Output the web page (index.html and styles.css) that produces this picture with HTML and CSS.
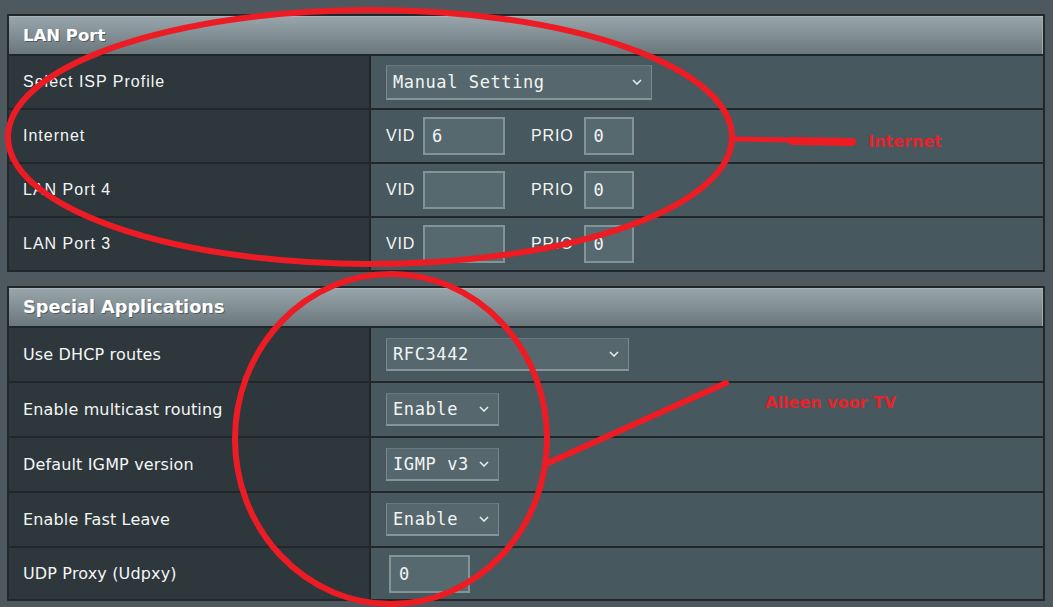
FILE: index.html
```html
<!DOCTYPE html>
<html lang="en">
<head>
<meta charset="utf-8">
<title>LAN Port / Special Applications</title>
<link rel="stylesheet" href="styles.css">
</head>
<body>
<div class="page">
  <section class="form-table form-table-lan">
    <div class="form-head">LAN Port</div>
    <div class="form-row">
      <div class="label">Select ISP Profile</div>
      <div class="value">
        <div class="select select-wide"><span>Manual Setting</span><svg class="chev" viewBox="0 0 10 6"><polyline points="1,1 5,5 9,1"/></svg></div>
      </div>
    </div>
    <div class="form-row">
      <div class="label">Internet</div>
      <div class="value">
        <span class="field-label">VID</span><div class="input input-vid">6</div>
        <span class="field-label field-label-prio">PRIO</span><div class="input input-prio">0</div>
      </div>
    </div>
    <div class="form-row">
      <div class="label">LAN Port 4</div>
      <div class="value">
        <span class="field-label">VID</span><div class="input input-vid"></div>
        <span class="field-label field-label-prio">PRIO</span><div class="input input-prio">0</div>
      </div>
    </div>
    <div class="form-row">
      <div class="label">LAN Port 3</div>
      <div class="value">
        <span class="field-label">VID</span><div class="input input-vid"></div>
        <span class="field-label field-label-prio">PRIO</span><div class="input input-prio">0</div>
      </div>
    </div>
  </section>

  <section class="form-table form-table-apps">
    <div class="form-head">Special Applications</div>
    <div class="form-row">
      <div class="label">Use DHCP routes</div>
      <div class="value">
        <div class="select select-rfc"><span>RFC3442</span><svg class="chev" viewBox="0 0 10 6"><polyline points="1,1 5,5 9,1"/></svg></div>
      </div>
    </div>
    <div class="form-row">
      <div class="label">Enable multicast routing</div>
      <div class="value">
        <div class="select select-small"><span>Enable</span><svg class="chev" viewBox="0 0 10 6"><polyline points="1,1 5,5 9,1"/></svg></div>
      </div>
    </div>
    <div class="form-row">
      <div class="label">Default IGMP version</div>
      <div class="value">
        <div class="select select-small"><span>IGMP v3</span><svg class="chev" viewBox="0 0 10 6"><polyline points="1,1 5,5 9,1"/></svg></div>
      </div>
    </div>
    <div class="form-row">
      <div class="label">Enable Fast Leave</div>
      <div class="value">
        <div class="select select-small"><span>Enable</span><svg class="chev" viewBox="0 0 10 6"><polyline points="1,1 5,5 9,1"/></svg></div>
      </div>
    </div>
    <div class="form-row">
      <div class="label">UDP Proxy (Udpxy)</div>
      <div class="value">
        <div class="input input-udp">0</div>
      </div>
    </div>
  </section>

  <svg class="annot" viewBox="0 0 1053 607" width="1053" height="607">
    <ellipse cx="370" cy="137" rx="362" ry="127"/>
    <line x1="733" y1="139" x2="792" y2="140" class="thin"/>
    <line x1="792" y1="141" x2="852" y2="142" class="thick"/>
    <text x="868" y="147">Internet</text>
    <ellipse cx="391" cy="439" rx="156" ry="165"/>
    <line x1="548" y1="463" x2="726" y2="383"/>
    <text x="765" y="408">Alleen voor TV</text>
  </svg>
</div>
</body>
</html>
```

FILE: styles.css
```css
html, body {
  margin: 0;
  padding: 0;
}

body {
  background: #4d595e;
  color: #ffffff;
  font-family: "Liberation Sans", Arial, sans-serif;
  overflow: hidden;
}

.page {
  position: relative;
  width: 1053px;
  height: 607px;
  box-sizing: border-box;
  padding: 14px 8px 0 7px;
}

.form-table {
  border: 2px solid #222729;
  background: #47585e;
}

.form-table-apps {
  margin-top: 14px;
}

.form-head {
  height: 38px;
  display: flex;
  align-items: center;
  padding-left: 14px;
  background: linear-gradient(#99a6ab, #6a787e);
  box-shadow: inset 0 1px 0 #a9b3b7, inset -1px 0 0 #a2adb1;
  font-family: "DejaVu Sans", Verdana, sans-serif;
  font-weight: bold;
  font-size: 16.5px;
  color: #ffffff;
  text-shadow: 1px 1px 0 rgba(0, 0, 0, 0.35);
}

.form-table-apps .form-head {
  font-size: 17.7px;
}

.form-row {
  display: grid;
  grid-template-columns: 362px 1fr;
  border-top: 2px solid #222729;
  height: 52px;
}

.form-table-apps .form-row {
  height: 53px;
}

.form-table-apps .form-row:last-child {
  height: 51px;
}

.label {
  background: #2e373c;
  border-right: 2px solid #222729;
  display: flex;
  align-items: center;
  padding-left: 14px;
  font-size: 16px;
  letter-spacing: 1px;
  color: #f4f6f6;
}

.form-table-apps .label {
  font-family: "DejaVu Sans", Verdana, sans-serif;
  font-size: 16px;
  letter-spacing: 0.15px;
}

.value {
  display: flex;
  align-items: center;
  padding-left: 15px;
  background: #47585e;
}

.field-label {
  font-size: 16px;
  letter-spacing: 0.8px;
  margin-right: 8px;
  color: #f4f6f6;
}

.field-label-prio {
  margin-left: 26px;
  margin-right: 11px;
}

.select {
  box-sizing: border-box;
  display: flex;
  align-items: center;
  justify-content: space-between;
  padding-left: 6px;
  padding-right: 9px;
  background: #56686e;
  border: 1px solid #7a898e;
  border-top-color: #6a797e;
  border-bottom: 2px solid #87959a;
  font-family: "DejaVu Sans Mono", "Liberation Mono", monospace;
  font-size: 17px;
  letter-spacing: 0.6px;
  color: #f3f5f5;
}

.select-wide {
  width: 266px;
  height: 35px;
}

.select-rfc {
  width: 243px;
  height: 33px;
}

.select-small {
  width: 113px;
  height: 33px;
}

.chev {
  width: 10px;
  height: 6px;
  flex: none;
}

.chev polyline {
  fill: none;
  stroke: #e4e9ea;
  stroke-width: 1.6;
}

.input {
  box-sizing: border-box;
  height: 38px;
  display: flex;
  align-items: center;
  padding-left: 7px;
  background: #56696f;
  border: 2px solid #849397;
  font-family: "DejaVu Sans Mono", "Liberation Mono", monospace;
  font-size: 17px;
  color: #f3f5f5;
}

.input-vid {
  width: 82px;
}

.input-prio {
  width: 50px;
}

.input-udp {
  width: 81px;
  margin-left: 3px;
  padding-left: 8px;
}

.annot {
  position: absolute;
  left: 0;
  top: 0;
  pointer-events: none;
}

.annot ellipse,
.annot line {
  fill: none;
  stroke: #ed1c24;
  stroke-width: 6;
  stroke-linecap: round;
}

.annot line.thin {
  stroke-width: 5;
}

.annot line.thick {
  stroke-width: 8;
}

.annot text {
  font-family: "DejaVu Sans", sans-serif;
  font-weight: bold;
  font-size: 16px;
  fill: #e5232b;
}
```
